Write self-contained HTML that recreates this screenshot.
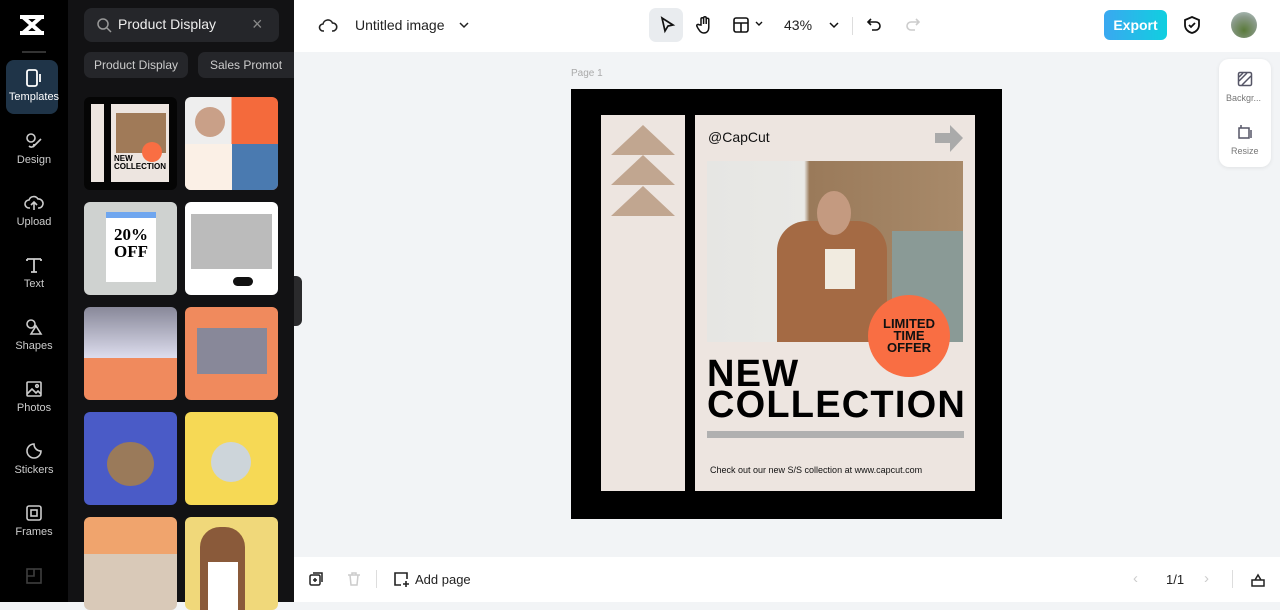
<!DOCTYPE html><html><head><style>
*{margin:0;padding:0;box-sizing:border-box}
body{width:1280px;height:602px;overflow:hidden;font-family:"Liberation Sans",sans-serif;background:#f2f4f6;position:relative}
.a{position:absolute}
.nav{left:0;top:0;width:68px;height:602px;background:#000}
.ni{position:absolute;left:0;width:68px;text-align:center;color:#ccc;font-size:11px}
.ni svg{display:block;margin:0 auto 3px}
.panel{left:68px;top:0;width:226px;height:602px;background:#121214}
.th{position:absolute;width:93px;height:93px;border-radius:6px;overflow:hidden}
.tb{color:#222;font-size:14px}
</style></head><body>
<div class="a nav">
 <div class="a" style="left:17px;top:14px;width:30px;height:22px"><svg width="30" height="22" viewBox="0 0 30 22"><path d="M3 3h24M3 19h24M6 3l18 16M24 3L6 19" stroke="#fff" stroke-width="4" fill="none"/></svg></div>
 <div class="a" style="left:22px;top:51px;width:24px;height:2px;background:#333"></div>
 <div class="a" style="left:6px;top:60px;width:52px;height:54px;border-radius:8px;background:#1f3448"></div>
 <div class="ni" style="top:68px;color:#fff"><svg width="20" height="20" viewBox="0 0 20 20" fill="none" stroke="#fff" stroke-width="1.8"><rect x="3" y="2" width="10" height="16" rx="2"/><path d="M16 6v8"/></svg>Templates</div>
 <div class="ni" style="top:131px"><svg width="20" height="20" viewBox="0 0 20 20" fill="none" stroke="#ccc" stroke-width="1.6"><circle cx="7" cy="7" r="4"/><path d="M9 16l8-8M5 15c2 2 5 1 5-2"/></svg>Design</div>
 <div class="ni" style="top:193px"><svg width="20" height="20" viewBox="0 0 20 20" fill="none" stroke="#ccc" stroke-width="1.6"><path d="M6 15H5a4 4 0 010-8 5 5 0 019-1 4 4 0 011 9h-1M10 9v8M7 12l3-3 3 3"/></svg>Upload</div>
 <div class="ni" style="top:255px"><svg width="20" height="20" viewBox="0 0 20 20" fill="none" stroke="#ccc" stroke-width="1.8"><path d="M3 4h14M10 4v13M3 4v2M17 4v2M7 17h6"/></svg>Text</div>
 <div class="ni" style="top:317px"><svg width="20" height="20" viewBox="0 0 20 20" fill="none" stroke="#ccc" stroke-width="1.6"><circle cx="7" cy="7" r="4"/><path d="M12 9l5 8H7z"/></svg>Shapes</div>
 <div class="ni" style="top:379px"><svg width="20" height="20" viewBox="0 0 20 20" fill="none" stroke="#ccc" stroke-width="1.6"><rect x="3" y="3" width="14" height="14" rx="1"/><path d="M3 15l5-5 4 4 2-2 3 3"/><circle cx="13" cy="7" r="1.3"/></svg>Photos</div>
 <div class="ni" style="top:441px"><svg width="20" height="20" viewBox="0 0 20 20" fill="none" stroke="#ccc" stroke-width="1.6"><path d="M17 10a7 7 0 11-7-7c0 4 3 7 7 7z"/></svg>Stickers</div>
 <div class="ni" style="top:503px"><svg width="20" height="20" viewBox="0 0 20 20" fill="none" stroke="#ccc" stroke-width="1.6"><rect x="3" y="3" width="14" height="14" rx="2"/><rect x="7" y="7" width="6" height="6"/></svg>Frames</div>
 <div class="ni" style="top:566px;opacity:.3"><svg width="20" height="20" viewBox="0 0 20 20" fill="none" stroke="#ccc" stroke-width="1.6"><rect x="3" y="3" width="14" height="14"/><path d="M10 3v7H3"/></svg></div>
</div>
<div class="a panel">
 <div class="a" style="left:16px;top:8px;width:195px;height:34px;border-radius:8px;background:#25262a"></div>
 <svg class="a" style="left:28px;top:17px" width="16" height="16" viewBox="0 0 16 16" fill="none" stroke="#999" stroke-width="1.5"><circle cx="7" cy="7" r="5"/><path d="M11 11l4 4"/></svg>
 <div class="a" style="left:50px;top:16px;color:#eee;font-size:14px">Product Display</div>
 <div class="a" style="left:184px;top:14px;color:#888;font-size:18px">×</div>
 <div class="a" style="left:16px;top:52px;width:104px;height:26px;border-radius:7px;background:#25262a;color:#ccc;font-size:12px;text-align:center;line-height:26px">Product Display</div>
 <div class="a" style="left:130px;top:52px;width:96px;height:26px;border-radius:7px 0 0 7px;background:#25262a;color:#ccc;font-size:12px;padding-left:12px;line-height:26px;white-space:nowrap;overflow:hidden">Sales Promot</div>
 <div class="th" style="left:16px;top:97px;background:#050505"><div class="a" style="left:7px;top:7px;width:13px;height:78px;background:#ede5e0"></div><div class="a" style="left:27px;top:7px;width:58px;height:78px;background:#ede5e0"></div><div class="a" style="left:32px;top:16px;width:50px;height:40px;background:#a07a58"></div><div class="a" style="left:58px;top:45px;width:20px;height:20px;border-radius:50%;background:#f96e43"></div><div class="a" style="left:30px;top:58px;font-size:8px;font-weight:bold;line-height:8px">NEW<br>COLLECTION</div></div>
 <div class="th" style="left:117px;top:97px;background:linear-gradient(90deg,#eee 50%,#f46a3c 50%)"><div class="a" style="left:47px;top:47px;width:46px;height:46px;background:#4a7ab0"></div><div class="a" style="left:0;top:47px;width:47px;height:46px;background:#fbf0e6"></div><div class="a" style="left:10px;top:10px;width:30px;height:30px;border-radius:50%;background:#c9a088"></div></div>
 <div class="th" style="left:16px;top:202px;background:#cfd2d0"><div class="a" style="left:22px;top:10px;width:50px;height:70px;background:#fff;border-top:6px solid #6fa6ef"></div><div class="a" style="left:24px;top:24px;font:bold 17px 'Liberation Serif';line-height:17px;text-align:center;width:46px">20%<br>OFF</div></div>
 <div class="th" style="left:117px;top:202px;background:#fff"><div class="a" style="left:6px;top:12px;width:81px;height:55px;background:#bbb"></div><div class="a" style="left:48px;top:75px;width:20px;height:9px;border-radius:5px;background:#111"></div></div>
 <div class="th" style="left:16px;top:307px;background:linear-gradient(#889 0,#dde 55%,#f08a5d 55%)"></div>
 <div class="th" style="left:117px;top:307px;background:#f08a5d"><div class="a" style="left:12px;top:21px;width:70px;height:46px;background:#889"></div></div>
 <div class="th" style="left:16px;top:412px;background:#4a5bc7"><div class="a" style="left:23px;top:30px;width:47px;height:44px;border-radius:50%;background:#9a7a5a"></div></div>
 <div class="th" style="left:117px;top:412px;background:#f6d955"><div class="a" style="left:26px;top:30px;width:40px;height:40px;border-radius:50%;background:#cdd5da"></div></div>
 <div class="th" style="left:16px;top:517px;background:linear-gradient(#f0a46d 0,#f0a46d 40%,#d9c9b8 40%)"></div>
 <div class="th" style="left:117px;top:517px;background:#f0d87a"><div class="a" style="left:15px;top:10px;width:45px;height:85px;border-radius:20px 20px 0 0;background:#8a5a3a"></div><div class="a" style="left:23px;top:45px;width:30px;height:50px;background:#fff"></div></div>
</div>
<div class="a" style="left:294px;top:276px;width:8px;height:50px;background:#2a2a2c;border-radius:0 6px 6px 0"></div>
<!-- top bar -->
<div class="a" style="left:294px;top:0;width:986px;height:52px;background:#fff"></div>
<svg class="a" style="left:318px;top:16px" width="20" height="20" viewBox="0 0 20 20" fill="none" stroke="#222" stroke-width="1.6"><path d="M6 15H5a3.5 3.5 0 010-7 5 5 0 019.5-1A3.5 3.5 0 0115 15h-1"/></svg>
<div class="a tb" style="left:355px;top:17px">Untitled image</div>
<svg class="a" style="left:458px;top:20px" width="12" height="10" viewBox="0 0 12 10" fill="none" stroke="#222" stroke-width="1.5"><path d="M2 3l4 4 4-4"/></svg>
<div class="a" style="left:649px;top:8px;width:34px;height:34px;border-radius:7px;background:#e9ecef"></div>
<svg class="a" style="left:657px;top:15px" width="20" height="20" viewBox="0 0 20 20" fill="none" stroke="#111" stroke-width="1.7"><path d="M5 3l11 7-5 1-3 5z"/></svg>
<svg class="a" style="left:694px;top:15px" width="20" height="20" viewBox="0 0 20 20" fill="none" stroke="#111" stroke-width="1.5"><path d="M7 10V4a1.3 1.3 0 012.6 0v5V3a1.3 1.3 0 012.6 0v6V4.5a1.3 1.3 0 012.6 0V12c0 4-2 6-5 6-3 0-4-2-6-5l-1-2a1.3 1.3 0 012.2-1.2z"/></svg>
<svg class="a" style="left:732px;top:16px" width="18" height="18" viewBox="0 0 18 18" fill="none" stroke="#111" stroke-width="1.6"><rect x="2" y="2" width="14" height="14" rx="2"/><path d="M2 7h14M9 7v9"/></svg>
<svg class="a" style="left:754px;top:20px" width="10" height="8" viewBox="0 0 10 8" fill="none" stroke="#111" stroke-width="1.4"><path d="M2 2l3 3 3-3"/></svg>
<div class="a tb" style="left:784px;top:17px">43%</div>
<svg class="a" style="left:828px;top:20px" width="12" height="10" viewBox="0 0 12 10" fill="none" stroke="#111" stroke-width="1.5"><path d="M2 3l4 4 4-4"/></svg>
<div class="a" style="left:852px;top:17px;width:1px;height:18px;background:#ddd"></div>
<svg class="a" style="left:866px;top:16px" width="18" height="18" viewBox="0 0 18 18" fill="none" stroke="#111" stroke-width="1.6"><path d="M5 3L2 6l3 3M2 6h8a4 4 0 010 8H6"/></svg>
<svg class="a" style="left:903px;top:16px" width="18" height="18" viewBox="0 0 18 18" fill="none" stroke="#ccc" stroke-width="1.6"><path d="M13 3l3 3-3 3M16 6H8a4 4 0 000 8h4"/></svg>
<div class="a" style="left:1104px;top:10px;width:63px;height:30px;border-radius:6px;background:linear-gradient(90deg,#3aa8f0,#10cfe0);color:#fff;font-weight:bold;font-size:14px;text-align:center;line-height:30px">Export</div>
<svg class="a" style="left:1182px;top:15px" width="20" height="20" viewBox="0 0 20 20" fill="none" stroke="#111" stroke-width="1.8"><path d="M10 2l7 3v5c0 4-3 7-7 8-4-1-7-4-7-8V5z"/><path d="M7 10l2 2 4-4"/></svg>
<div class="a" style="left:1231px;top:12px;width:26px;height:26px;border-radius:50%;background:radial-gradient(circle at 50% 70%,#5a7a3a,#8a9a8a 60%,#bcc)"></div>
<!-- right tools -->
<div class="a" style="left:1219px;top:59px;width:52px;height:108px;border-radius:10px;background:#fff;box-shadow:0 1px 4px rgba(0,0,0,.08)"></div>
<svg class="a" style="left:1237px;top:71px" width="16" height="16" viewBox="0 0 16 16" fill="none" stroke="#556" stroke-width="1.5"><rect x="1.5" y="1.5" width="13" height="13" rx="1.5"/><path d="M2 10l8-8M5 14l9-9M2 6l4-4" /></svg>
<div class="a" style="left:1226px;top:93px;font-size:9px;color:#777">Backgr...</div>
<svg class="a" style="left:1237px;top:124px" width="16" height="16" viewBox="0 0 16 16" fill="none" stroke="#556" stroke-width="1.5"><path d="M2 4h10v10H2zM4 1v3M14 6v8"/></svg>
<div class="a" style="left:1231px;top:146px;font-size:9px;color:#777">Resize</div>
<div class="a" style="left:571px;top:68px;font-size:10px;color:#aaa">Page 1</div>
<!-- canvas -->
<div class="a" style="left:571px;top:89px;width:431px;height:430px;background:#000">
 <div class="a" style="left:30px;top:26px;width:84px;height:376px;background:#ede5e0"></div>
 <svg class="a" style="left:40px;top:36px" width="64" height="92" viewBox="0 0 64 92" fill="#c1a690"><path d="M32 0L64 30H0zM32 30L64 60H0zM32 61L64 91H0z"/></svg>
 <div class="a" style="left:124px;top:26px;width:280px;height:376px;background:#ede5e0"></div>
 <div class="a" style="left:137px;top:40px;font-size:14px;color:#111">@CapCut</div>
 <svg class="a" style="left:364px;top:36px" width="28" height="27" viewBox="0 0 28 27" fill="#aaa"><path d="M0 8h15V0l13 13-13 14v-9H0z"/></svg>
 <div class="a" style="left:136px;top:72px;width:256px;height:181px;overflow:hidden;background:linear-gradient(90deg,#e6e6e3 0,#e9e9e6 38%,#9a7a5a 40%,#a88a6a 100%)">
  <div class="a" style="left:70px;top:60px;width:110px;height:121px;background:#a46a44;border-radius:30px 30px 0 0"></div>
  <div class="a" style="left:118px;top:88px;width:30px;height:40px;background:#f1ebe0"></div>
  <div class="a" style="left:110px;top:30px;width:34px;height:44px;background:#c49a80;border-radius:50%"></div>
  <div class="a" style="left:185px;top:70px;width:71px;height:111px;background:#8a9a96"></div>
 </div>
 <div class="a" style="left:297px;top:206px;width:82px;height:82px;border-radius:50%;background:#f96e43;font-weight:bold;font-size:13px;line-height:12px;text-align:center;padding-top:23px;color:#111">LIMITED<br>TIME<br>OFFER</div>
 <div class="a" style="left:136px;top:270px;font-weight:900;font-size:38px;line-height:31px;color:#000;letter-spacing:1.2px">NEW<br>COLLECTION</div>
 <div class="a" style="left:136px;top:342px;width:257px;height:7px;background:#b0b0b0"></div>
 <div class="a" style="left:139px;top:376px;font-size:9px;color:#111">Check out our new S/S collection at www.capcut.com</div>
</div>
<!-- bottom bar -->
<div class="a" style="left:294px;top:557px;width:986px;height:45px;background:#fff"></div>
<svg class="a" style="left:308px;top:571px" width="16" height="16" viewBox="0 0 16 16" fill="none" stroke="#222" stroke-width="1.5"><rect x="2" y="4" width="10" height="10" rx="1.5"/><path d="M5 2h9v9M7 7v4M5 9h4"/></svg>
<svg class="a" style="left:346px;top:571px" width="16" height="16" viewBox="0 0 16 16" fill="none" stroke="#ccc" stroke-width="1.5"><path d="M2 4h12M6 4V2h4v2M4 4l1 10h6l1-10"/></svg>
<div class="a" style="left:376px;top:570px;width:1px;height:18px;background:#ddd"></div>
<svg class="a" style="left:393px;top:571px" width="17" height="17" viewBox="0 0 17 17" fill="none" stroke="#222" stroke-width="1.6"><path d="M14 8V2H2v12h6M10 13h6M13 10v6"/></svg>
<div class="a tb" style="left:415px;top:572px;font-size:13px">Add page</div>
<div class="a" style="left:1133px;top:570px;color:#ccc;font-size:15px">‹</div>
<div class="a" style="left:1166px;top:572px;color:#222;font-size:13px">1/1</div>
<div class="a" style="left:1204px;top:570px;color:#ccc;font-size:15px">›</div>
<div class="a" style="left:1232px;top:570px;width:1px;height:18px;background:#ddd"></div>
<svg class="a" style="left:1250px;top:572px" width="16" height="16" viewBox="0 0 16 16" fill="none" stroke="#222" stroke-width="1.5"><path d="M2 8h12v6H2zM5 8l3-5 3 5"/></svg>
</body></html>
